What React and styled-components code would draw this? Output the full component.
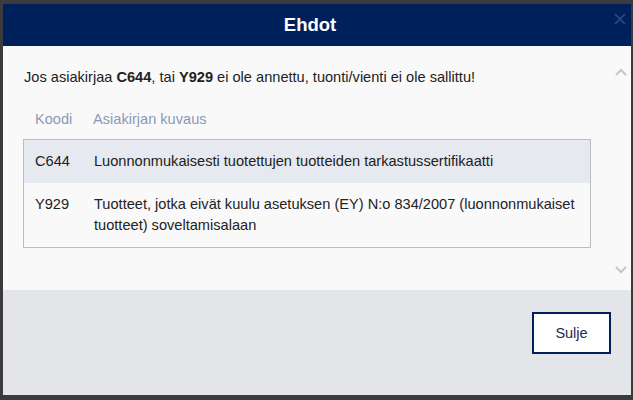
import React from "react";
import styled, { createGlobalStyle } from "styled-components";

const Global = createGlobalStyle`
  html, body { margin: 0; padding: 0; }
  body {
    background: #3b3b3d;
    font-family: "Liberation Sans", Arial, sans-serif;
    width: 633px;
    height: 400px;
    overflow: hidden;
  }
`;

const Backdrop = styled.div`
  padding: 4px 2px 5px 3px;
  height: 400px;
  box-sizing: border-box;
`;

const Modal = styled.div`
  display: flex;
  flex-direction: column;
  height: 100%;
  background: #f9f9fa;
`;

const Header = styled.div`
  position: relative;
  height: 42px;
  background: #00205b;
  display: flex;
  align-items: center;
  justify-content: center;
  padding-right: 14px;
  color: #fff;
  font-size: 18.5px;
  font-weight: bold;
`;

const Close = styled.button`
  position: absolute;
  right: 4px;
  top: 8px;
  background: none;
  border: 0;
  padding: 0;
  width: 14px;
  height: 14px;
  cursor: pointer;
`;

const Body = styled.div`
  position: relative;
  height: 244px;
  padding: 21px 40px 0 20px;
  box-sizing: border-box;
  font-size: 14.6px;
  color: #222;
`;

const Intro = styled.p`
  margin: 0 0 22px 1px;
  line-height: 20px;
`;

const Table = styled.div`
  display: grid;
  grid-template-columns: 70px 1fr;
`;

const HeadCell = styled.div`
  color: #8c9ab2;
  padding: 0 0 10px ${(p) => (p.$first ? "12px" : "0")};
  line-height: 20px;
`;

const Rows = styled.div`
  grid-column: 1 / 3;
  display: grid;
  grid-template-columns: 70px 1fr;
  border: 1px solid #b9bcc2;
`;

const Cell = styled.div`
  background: ${(p) => (p.$shaded ? "#e6e9ef" : "#f9f9fa")};
  padding: 11px 12px 11px ${(p) => (p.$first ? "11px" : "0")};
  line-height: 21px;
  color: #222;
`;

const Arrow = styled.div`
  position: absolute;
  right: 3px;
  top: ${(p) => p.$top}px;
  width: 14px;
  height: 10px;
`;

const Footer = styled.div`
  flex: 1;
  background: #e3e5e9;
  display: flex;
  justify-content: flex-end;
  align-items: flex-start;
  padding: 22px 20px 0 0;
`;

const Button = styled.button`
  width: 79px;
  height: 42px;
  background: #fff;
  border: 2px solid #00205b;
  font-family: "Liberation Sans", Arial, sans-serif;
  font-size: 14.5px;
  color: #1a2a4f;
  cursor: pointer;
`;

const rows = [
  { code: "C644", text: "Luonnonmukaisesti tuotettujen tuotteiden tarkastussertifikaatti" },
  {
    code: "Y929",
    text: "Tuotteet, jotka eivät kuulu asetuksen (EY) N:o 834/2007 (luonnonmukaiset tuotteet) soveltamisalaan",
  },
];

export default function App() {
  return (
    <>
      <Global />
      <Backdrop>
        <Modal>
          <Header>
            Ehdot
            <Close aria-label="close">
              <svg width="14" height="14" viewBox="0 0 14 14">
                <path d="M2 2L12 12M12 2L2 12" stroke="#34497a" strokeWidth="1.6" />
              </svg>
            </Close>
          </Header>
          <Body>
            <Intro>
              Jos asiakirjaa <b>C644</b>, tai <b>Y929</b> ei ole annettu, tuonti/vienti ei ole sallittu!
            </Intro>
            <Table>
              <HeadCell $first>Koodi</HeadCell>
              <HeadCell>Asiakirjan kuvaus</HeadCell>
              <Rows>
                {rows.map((r, i) => (
                  <React.Fragment key={r.code}>
                    <Cell $first $shaded={i === 0}>{r.code}</Cell>
                    <Cell $shaded={i === 0}>{r.text}</Cell>
                  </React.Fragment>
                ))}
              </Rows>
            </Table>
            <Arrow $top={18}>
              <svg width="14" height="10" viewBox="0 0 14 10">
                <path d="M2 8L7 3L12 8" fill="none" stroke="#c4c6cb" strokeWidth="2" />
              </svg>
            </Arrow>
            <Arrow $top={216}>
              <svg width="14" height="10" viewBox="0 0 14 10">
                <path d="M2 2L7 7L12 2" fill="none" stroke="#c4c6cb" strokeWidth="2" />
              </svg>
            </Arrow>
          </Body>
          <Footer>
            <Button>Sulje</Button>
          </Footer>
        </Modal>
      </Backdrop>
    </>
  );
}
